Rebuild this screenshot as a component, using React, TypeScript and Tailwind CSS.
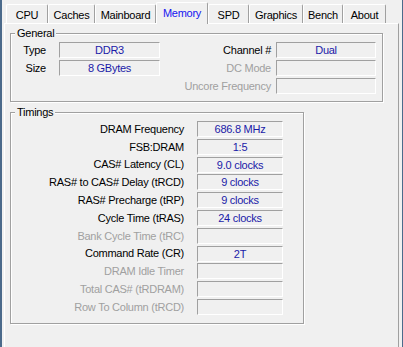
import React from "react";

const tabs = [
  { name: "CPU", w: "w-[42px]" },
  { name: "Caches", w: "w-[47px]" },
  { name: "Mainboard", w: "w-[61px]" },
  { name: "Memory", w: "w-[52px]", active: true },
  { name: "SPD", w: "w-[41px]" },
  { name: "Graphics", w: "w-[54px]" },
  { name: "Bench", w: "w-[40px]" },
  { name: "About", w: "w-[43px]" },
];

const timings: { label: string; value?: string; off?: boolean }[] = [
  { label: "DRAM Frequency", value: "686.8 MHz" },
  { label: "FSB:DRAM", value: "1:5" },
  { label: "CAS# Latency (CL)", value: "9.0 clocks" },
  { label: "RAS# to CAS# Delay (tRCD)", value: "9 clocks" },
  { label: "RAS# Precharge (tRP)", value: "9 clocks" },
  { label: "Cycle Time (tRAS)", value: "24 clocks" },
  { label: "Bank Cycle Time (tRC)", off: true },
  { label: "Command Rate (CR)", value: "2T" },
  { label: "DRAM Idle Timer", off: true },
  { label: "Total CAS# (tRDRAM)", off: true },
  { label: "Row To Column (tRCD)", off: true },
];

const Field = ({ value, w }: { value?: string; w: string }) => (
  <div
    className={`${w} h-[16px] shrink-0 border-t border-l border-t-[#a0a0a0] border-l-[#a0a0a0] border-b border-r border-b-white border-r-white text-center leading-[14px] text-[#1a1aa8]`}
  >
    {value}
  </div>
);

const Group = ({
  title,
  width,
  children,
}: {
  title: string;
  width: string;
  children: React.ReactNode;
}) => (
  <div
    className={`${width} border border-[#a0a0a0] shadow-[inset_1px_1px_0_#fff,1px_1px_0_#fff]`}
  >
    <div className="flex h-[13px] -mt-[7px] pl-[4px]">
      <span className="bg-[#f0f0f0] px-[2px] leading-[13px]">{title}</span>
    </div>
    {children}
  </div>
);

export default function App() {
  return (
    <div
      className="w-[403px] h-[347px] flex bg-[#f0f0f0] overflow-hidden text-[11px] tracking-[-0.25px] text-black"
      style={{ fontFamily: '"Liberation Sans", Arial, sans-serif' }}
    >
      <div className="w-[2px] bg-[#4b6a8b]" />
      <div className="w-[395px] ml-[2px] flex flex-col">
        {/* tab strip */}
        <div className="h-[23px] flex items-end pl-[2px]">
          {tabs.map((t) =>
            t.active ? (
              <div
                key={t.name}
                className={`${t.w} h-[22px] -mb-px relative z-10 bg-[#f0f0f0] border-l border-t border-l-white border-t-white border-r border-r-[#a0a0a0] rounded-t-[2px] flex items-center justify-center text-[#1515f0]`}
              >
                {t.name}
              </div>
            ) : (
              <div
                key={t.name}
                className={`${t.w} h-[19px] bg-[#f0f0f0] border-l border-t border-l-white border-t-white border-r border-r-[#a0a0a0] rounded-t-[2px] flex items-center justify-center pt-[2px]`}
              >
                {t.name}
              </div>
            )
          )}
        </div>
        {/* panel */}
        <div className="flex-1 border-t border-l border-t-white border-l-white border-r border-r-[#a0a0a0] pl-[5px] pt-[9px]">
          <Group title="General" width="w-[373px]">
            <div className="pt-[2px] pb-[7px] pr-[6px] flex flex-col gap-[2px]">
              <div className="flex items-center h-[16px]">
                <span className="w-[35px] text-right">Type</span>
                <div className="ml-[13px]">
                  <Field w="w-[101px]" value="DDR3" />
                </div>
                <span className="flex-1 text-right">Channel #</span>
                <div className="ml-[5px]">
                  <Field w="w-[100px]" value="Dual" />
                </div>
              </div>
              <div className="flex items-center h-[16px]">
                <span className="w-[35px] text-right">Size</span>
                <div className="ml-[13px]">
                  <Field w="w-[101px]" value="8 GBytes" />
                </div>
                <span className="flex-1 text-right text-[#a0a0a0]">DC Mode</span>
                <div className="ml-[5px]">
                  <Field w="w-[100px]" />
                </div>
              </div>
              <div className="flex items-center h-[16px]">
                <span className="w-[149px]" />
                <span className="flex-1 text-right text-[#a0a0a0]">
                  Uncore Frequency
                </span>
                <div className="ml-[5px]">
                  <Field w="w-[100px]" />
                </div>
              </div>
            </div>
          </Group>
          <div className="mt-[10px]">
            <Group title="Timings" width="w-[294px]">
              <div className="pt-[2px] pb-[8px] pr-[20px] flex flex-col gap-[1.8px]">
                {timings.map((r) => (
                  <div key={r.label} className="flex items-center h-[16px]">
                    <span
                      className={`w-[173px] text-right ${
                        r.off ? "text-[#a0a0a0]" : ""
                      }`}
                    >
                      {r.label}
                    </span>
                    <div className="ml-[13px]">
                      <Field w="w-[86px]" value={r.value} />
                    </div>
                  </div>
                ))}
              </div>
            </Group>
          </div>
        </div>
      </div>
      <div className="w-[3px]" />
      <div className="w-[1px] bg-[#4b6a8b]" />
    </div>
  );
}
